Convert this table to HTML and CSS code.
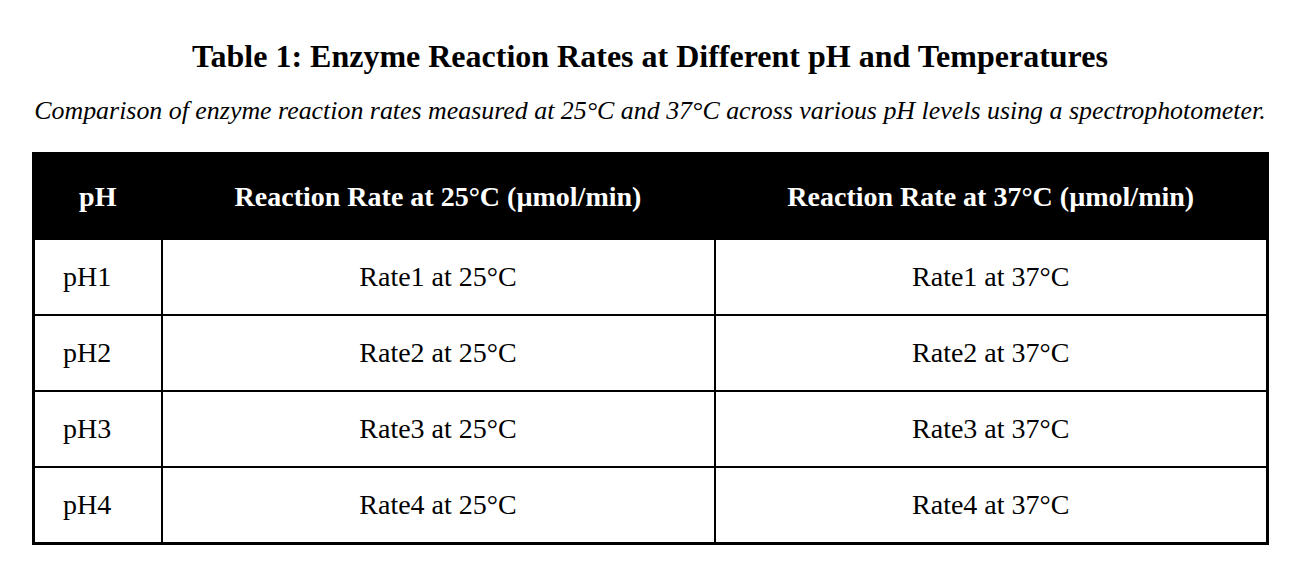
FILE: index.html
```html
<!DOCTYPE html>
<html>
<head>
<meta charset="utf-8">
<link rel="stylesheet" href="styles.css">
</head>
<body>
<div class="page">
  <h1 class="title">Table 1: Enzyme Reaction Rates at Different pH and Temperatures</h1>
  <p class="caption">Comparison of enzyme reaction rates measured at 25°C and 37°C across various pH levels using a spectrophotometer.</p>
  <table class="data">
    <colgroup>
      <col class="c1">
      <col class="c2">
      <col class="c3">
    </colgroup>
    <thead>
      <tr>
        <th>pH</th>
        <th>Reaction Rate at 25°C (µmol/min)</th>
        <th>Reaction Rate at 37°C (µmol/min)</th>
      </tr>
    </thead>
    <tbody>
      <tr><td class="ph">pH1</td><td>Rate1 at 25°C</td><td>Rate1 at 37°C</td></tr>
      <tr><td class="ph">pH2</td><td>Rate2 at 25°C</td><td>Rate2 at 37°C</td></tr>
      <tr><td class="ph">pH3</td><td>Rate3 at 25°C</td><td>Rate3 at 37°C</td></tr>
      <tr><td class="ph">pH4</td><td>Rate4 at 25°C</td><td>Rate4 at 37°C</td></tr>
    </tbody>
  </table>
</div>
</body>
</html>
```
FILE: styles.css
```css
html, body {
  margin: 0;
  padding: 0;
  background: #fff;
}
body {
  font-family: "Liberation Serif", "Times New Roman", serif;
  color: #000;
}
.page {
  padding: 36px 32px 0 32px;
}
.title {
  margin: 0;
  text-align: center;
  font-size: 32px;
  font-weight: bold;
  line-height: 40px;
}
.caption {
  margin: 19px -10px 0 -10px;
  text-align: center;
  font-style: italic;
  font-size: 25.9px;
  line-height: 32px;
  white-space: nowrap;
}
.data {
  margin-top: 25px;
  width: 1234px;
  border-collapse: collapse;
  table-layout: fixed;
  border: 3px solid #000;
}
.c1 { width: 128px; }
.c2 { width: 553px; }
.c3 { width: 553px; }
.data th {
  background: #000;
  color: #fff;
  font-weight: bold;
  font-size: 28px;
  height: 83px;
  padding: 0;
  text-align: center;
  border: 2px solid #000;
}
.data td {
  font-size: 28px;
  height: 74px;
  padding: 0;
  text-align: center;
  border: 2px solid #000;
}
.data td.ph {
  text-align: left;
  padding-left: 28px;
}
```
